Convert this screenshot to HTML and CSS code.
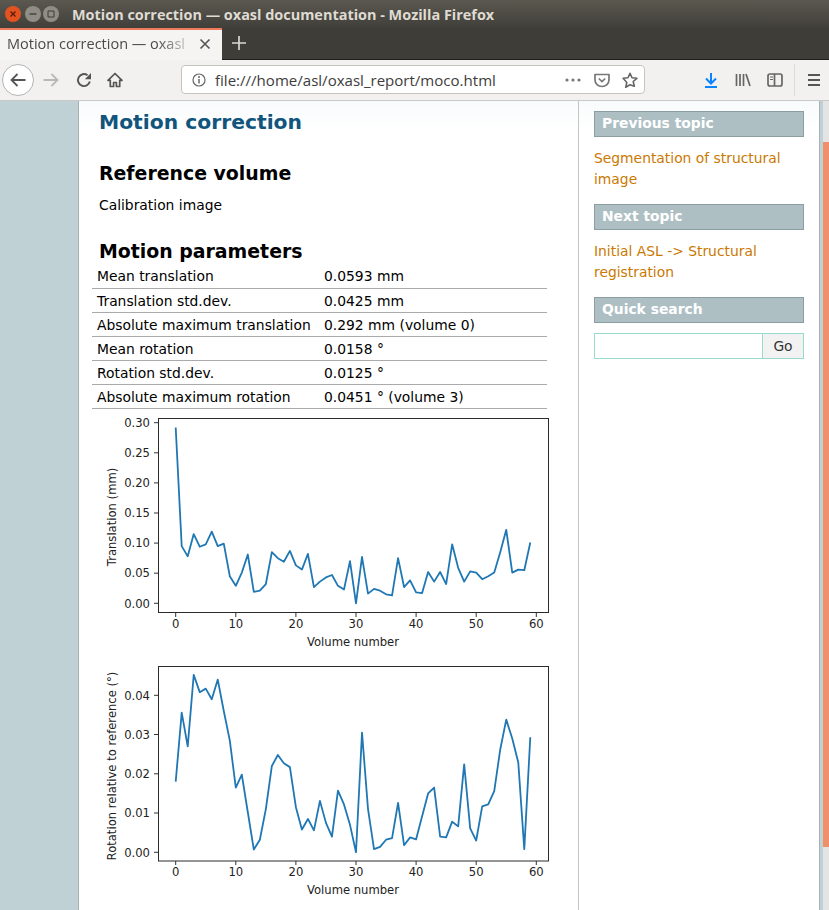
FILE: index.html
```html
<!DOCTYPE html>
<html>
	<head>
		<meta charset="UTF-8">
		<title>Motion correction — oxasl documentation</title>
		<link rel="stylesheet" href="styles.css">
	</head>
	<body>
		<div class="titlebar">
			<span class="winbtn close"><svg width="16" height="16" viewBox="0 0 16 16"><path d="M5.5 5.5l5 5M10.500 5.500l-5 5" stroke="#5a1a08" stroke-width="1.300"/></svg></span>
			<span class="winbtn"><svg width="16" height="16" viewBox="0 0 16 16"><path d="M4.500 8h7" stroke="#3c3b37" stroke-width="1.300"/></svg></span>
			<span class="winbtn"><svg width="16" height="16" viewBox="0 0 16 16"><path d="M5 5h6v6H5z" fill="none" stroke="#3c3b37"/></svg></span>
			<span class="wintitle">Motion correction — oxasl documentation - Mozilla Firefox</span>
		</div>
		<div class="tabbar">
			<div class="tab">
				<span class="tabtext">Motion correction — oxasl</span>
				<svg width="12" height="12" viewBox="0 0 12 12"><path d="M1.500 1.500l9 9M10.500 1.500l-9 9" stroke="#555" stroke-width="1.600"/></svg>
			</div>
			<svg class="newtab" width="14" height="14" viewBox="0 0 14 14"><path d="M7 0v14M0 7h14" stroke="#d8d7d3" stroke-width="1.700"/></svg>
		</div>
		<div class="navbar">
			<span class="backbtn"><svg width="16" height="16" viewBox="0 0 16 16"><path d="M15.500 8H1.500M7.500 2L1.500 8l6 6" fill="none" stroke="#555" stroke-width="1.800"/></svg></span>
			<svg class="ic fwd" width="16" height="16" viewBox="0 0 16 16"><path d="M.5 8h14M8.500 2l6 6-6 6" fill="none" stroke="#b9b8b6" stroke-width="1.800"/></svg>
			<svg class="ic reload" width="16" height="16" viewBox="0 0 16 16"><path d="M13.800 9.500A6 6 0 1 1 11.500 3.200" fill="none" stroke="#555" stroke-width="1.900"/><path d="M15 1v6.200H8.800z" fill="#555"/></svg>
			<svg class="ic home" width="16" height="16" viewBox="0 0 16 16"><path d="M8 1.500L1 8.300h2.300v6.200h3.300v-4h2.800v4h3.300V8.300H15z" fill="none" stroke="#555" stroke-width="1.700" stroke-linejoin="round"/></svg>
			<div class="urlbar">
				<svg width="14" height="14" viewBox="0 0 14 14"><circle cx="7" cy="7" r="6" fill="none" stroke="#666" stroke-width="1.200"/><path d="M7 6v4.500" stroke="#666" stroke-width="1.500"/><circle cx="7" cy="3.900" r="1" fill="#666"/></svg>
				<span class="urltext">file:///home/asl/oxasl_report/moco.html</span>
				<svg class="dots" width="16" height="4" viewBox="0 0 16 4"><circle cx="2" cy="2" r="1.600" fill="#777"/><circle cx="8" cy="2" r="1.600" fill="#777"/><circle cx="14" cy="2" r="1.600" fill="#777"/></svg>
				<svg class="pocket" width="16" height="16" viewBox="0 0 16 16"><path d="M1 2.500h14v5.500a7 6.500 0 0 1-14 0z" fill="none" stroke="#777" stroke-width="1.700" stroke-linejoin="round"/><path d="M4.800 6.500L8 9.500l3.200-3" fill="none" stroke="#777" stroke-width="1.700"/></svg>
				<svg class="star" width="16" height="16" viewBox="0 0 16 16"><path d="M8 1.300l2 4.500 4.900.5-3.700 3.200 1.100 4.800L8 12.800l-4.300 2.500 1.100-4.800L1.100 6.300 6 5.800z" fill="none" stroke="#666" stroke-width="1.600" stroke-linejoin="round"/></svg>
			</div>
			<svg class="ic download" width="16" height="16" viewBox="0 0 16 16"><path d="M8 1v10M3 6.500L8 11.500l5-5" fill="none" stroke="#0a84ff" stroke-width="2"/><path d="M2 15h12" stroke="#0a84ff" stroke-width="2"/></svg>
			<svg class="ic library" width="16" height="16" viewBox="0 0 16 16"><path d="M1.500 2v12M5 2v12M8.500 2v12M11 2l4 12" fill="none" stroke="#666" stroke-width="1.700"/></svg>
			<svg class="ic sidebtn" width="16" height="16" viewBox="0 0 16 16"><rect x="1" y="2" width="14" height="12" rx="2" fill="none" stroke="#666" stroke-width="1.700"/><path d="M7.500 2v12" stroke="#666" stroke-width="1.700"/><path d="M3 5h3M3 7.500h3" stroke="#666"/></svg>
			<span class="navsep"></span>
			<svg class="ic menu" width="16" height="16" viewBox="0 0 16 16"><path d="M2 3h12M2 8h12M2 13h12" stroke="#555" stroke-width="2"/></svg>
		</div>
		<div class="viewport">
			<div class="document">
				<h1>Motion correction</h1>
				<h2>Reference volume</h2>
				<p>Calibration image</p>
				<h2 class="params">Motion parameters</h2>
				<table>
					<tr><td class="name">Mean translation</td><td>0.0593 mm</td></tr>
					<tr><td class="name">Translation std.dev.</td><td>0.0425 mm</td></tr>
					<tr><td class="name">Absolute maximum translation</td><td>0.292 mm (volume 0)</td></tr>
					<tr><td class="name">Mean rotation</td><td>0.0158 °</td></tr>
					<tr><td class="name">Rotation std.dev.</td><td>0.0125 °</td></tr>
					<tr><td class="name">Absolute maximum rotation</td><td>0.0451 ° (volume 3)</td></tr>
				</table>
				<svg class="plot" width="470" height="240" viewBox="92 413 470 240">
					<rect x="158.500" y="418.500" width="390" height="194" class="frame"/>
					<path class="tick" d="M175.700 613v4M235.800 613v4M295.900 613v4M356 613v4M416.100 613v4M476.200 613v4M536.300 613v4M158 603.300h-4M158 573.200h-4M158 543.100h-4M158 513h-4M158 482.900h-4M158 452.800h-4M158 422.700h-4"/>
					<g class="xnum">
						<text x="175.700" y="628">0</text><text x="235.800" y="628">10</text><text x="295.900" y="628">20</text><text x="356" y="628">30</text><text x="416.100" y="628">40</text><text x="476.200" y="628">50</text><text x="536.300" y="628">60</text>
					</g>
					<g class="ynum">
						<text x="150" y="607.500">0.00</text><text x="150" y="577.400">0.05</text><text x="150" y="547.300">0.10</text><text x="150" y="517.200">0.15</text><text x="150" y="487.100">0.20</text><text x="150" y="457">0.25</text><text x="150" y="426.900">0.30</text>
					</g>
					<text class="xlabel" x="353" y="646">Volume number</text>
					<text class="ylabel" transform="translate(116 517) rotate(-90)">Translation (mm)</text>
					<polyline class="series" transform="translate(175.700 603.300) scale(6.010 -602)" points="0,.292 1,.095 2,.078 3,.115 4,.094 5,.098 6,.119 7,.095 8,.099 9,.045 10,.029 11,.051 12,.081 13,.019 14,.021 15,.032 16,.085 17,.075 18,.069 19,.087 20,.063 21,.056 22,.082 23,.027 24,.036 25,.043 26,.047 27,.029 28,.023 29,.070 30,0 31,.077 32,.016 33,.024 34,.021 35,.015 36,.013 37,.075 38,.027 39,.038 40,.018 41,.017 42,.052 43,.036 44,.052 45,.032 46,.098 47,.059 48,.036 49,.053 50,.051 51,.040 52,.045 53,.051 54,.085 55,.122 56,.051 57,.056 58,.055 59,.101"/>
				</svg>
				<svg class="plot" width="470" height="245" viewBox="92 660 470 245">
					<rect x="158.500" y="666.500" width="390" height="194.500" class="frame"/>
					<path class="tick" d="M175.700 861v4M235.800 861v4M295.900 861v4M356 861v4M416.100 861v4M476.200 861v4M536.300 861v4M158 852.300h-4M158 813h-4M158 773.800h-4M158 734.500h-4M158 695.300h-4"/>
					<g class="xnum">
						<text x="175.700" y="876">0</text><text x="235.800" y="876">10</text><text x="295.900" y="876">20</text><text x="356" y="876">30</text><text x="416.100" y="876">40</text><text x="476.200" y="876">50</text><text x="536.300" y="876">60</text>
					</g>
					<g class="ynum">
						<text x="150" y="856.500">0.00</text><text x="150" y="817.200">0.01</text><text x="150" y="778">0.02</text><text x="150" y="738.700">0.03</text><text x="150" y="699.500">0.04</text>
					</g>
					<text class="xlabel" x="353" y="894">Volume number</text>
					<text class="ylabel" transform="translate(116 766) rotate(-90)">Rotation relative to reference (°)</text>
					<polyline class="series" transform="translate(175.700 852.300) scale(6.010 -3925)" points="0,.018 1,.0356 2,.027 3,.0452 4,.0408 5,.0417 6,.039 7,.044 8,.036 9,.0285 10,.0165 11,.0198 12,.0102 13,.0007 14,.0032 15,.011 16,.022 17,.0248 18,.0227 19,.0217 20,.0115 21,.0058 22,.0085 23,.0056 24,.0131 25,.0075 26,.004 27,.0157 28,.0122 29,.0070 30,0 31,.0305 32,.011 33,.0008 34,.0014 35,.0032 36,.0036 37,.0126 38,.0018 39,.0038 40,.0033 41,.0092 42,.015 43,.0165 44,.004 45,.0038 46,.0078 47,.0066 48,.0224 49,.0061 50,.003 51,.0117 52,.0122 53,.0156 54,.0262 55,.0338 56,.029 57,.0229 58,.0008 59,.0293"/>
				</svg>
			</div>
			<div class="sidebar">
				<h3>Previous topic</h3>
				<p><a href="#">Segmentation of structural image</a></p>
				<h3>Next topic</h3>
				<p><a href="#">Initial ASL -&gt; Structural registration</a></p>
				<h3>Quick search</h3>
				<form class="search">
					<input type="text">
					<button type="button">Go</button>
				</form>
			</div>
			<div class="scrollbar"><div class="thumb"></div></div>
		</div>
	</body>
</html>
```

FILE: styles.css
```css
html, body{
	margin: 0;
	padding: 0;
	height: 910px;
	overflow: hidden;
}
body{
	font-family: "Open Sans", "Noto Sans", sans-serif;
	background: #bfd1d4;
}
.titlebar{
	height: 28px;
	display: flex;
	align-items: center;
	padding-left: 5px;
	box-sizing: border-box;
	background: linear-gradient(#5b584f, #403f3a);
}
.winbtn{
	width: 16px;
	height: 16px;
	border-radius: 50%;
	background: #8f8d86;
	margin-right: 2px;
	display: block;
}
.winbtn svg{
	display: block;
}
.winbtn.close{
	background: #e2531f;
	margin-right: 4px;
}
.wintitle{
	margin-left: 11px;
	color: #dfdbd2;
	font-size: 14.450px;
	font-weight: 700;
	white-space: nowrap;
}
.tabbar{
	height: 32px;
	box-sizing: border-box;
	display: flex;
	align-items: center;
	background: #3e3d38;
	border-bottom: 1px solid #1e1e1c;
}
.tab{
	width: 222px;
	height: 32px;
	box-sizing: border-box;
	align-self: flex-start;
	display: flex;
	align-items: center;
	padding: 0 11px 2px 7px;
	background: #f5f4f3;
	border-top: 2px solid #ee7b59;
}
.tabtext{
	width: 192px;
	white-space: nowrap;
	font-size: 14.500px;
	color: #4a4a48;
	margin-bottom: 2px;
	-webkit-mask-image: linear-gradient(to right, #000 150px, transparent 190px);
	mask-image: linear-gradient(to right, #000 150px, transparent 190px);
}
.newtab{
	margin: 0 0 2px 10px;
}
.navbar{
	height: 41px;
	box-sizing: border-box;
	display: flex;
	align-items: center;
	padding: 0 0 1px 2px;
	background: #f2f1f0;
	border-bottom: 1px solid #c9c9c9;
}
.backbtn{
	width: 32px;
	height: 32px;
	box-sizing: border-box;
	border-radius: 50%;
	background: #fff;
	border: 1px solid #b4b4b4;
	display: flex;
	align-items: center;
	justify-content: center;
}
.ic{
	flex: none;
}
.fwd{
	margin-left: 9px;
}
.reload{
	margin-left: 17px;
}
.home{
	margin-left: 15px;
}
.urlbar{
	width: 464px;
	height: 29px;
	box-sizing: border-box;
	margin-left: 58px;
	padding: 0 6px 0 10px;
	display: flex;
	align-items: center;
	background: #fff;
	border: 1px solid #c6c4c1;
	border-radius: 4px;
}
.urltext{
	margin-left: 9px;
	font-size: 15.050px;
	color: #3d3d3b;
	white-space: nowrap;
}
.dots{
	margin-left: auto;
}
.pocket{
	margin-left: 13px;
}
.star{
	margin-left: 12px;
}
.download{
	margin-left: 58px;
}
.library{
	margin-left: 16px;
}
.sidebtn{
	margin-left: 16px;
}
.navsep{
	width: 1px;
	height: 32px;
	margin-left: 11px;
	background: #dcdbd9;
}
.menu{
	margin-left: 11px;
}
.viewport{
	height: 810px;
	display: flex;
	overflow: hidden;
	font-family: "DejaVu Sans", sans-serif;
	font-size: 13.860px;
	color: #000;
}
.document{
	width: 501px;
	margin-left: 78px;
	flex: none;
	box-sizing: border-box;
	padding: 0 0 0 13px;
	background: linear-gradient(#f8fbfc, #fff 30px);
	border-left: 1px solid #a9b1b3;
	border-right: 1px solid #c4c4c4;
}
h1{
	margin: 6px 0 0 7px;
	font-size: 20.300px;
	line-height: 30px;
	color: #11557c;
}
h2{
	margin: 23px 0 0 7px;
	font-size: 18.900px;
	line-height: 26px;
}
.document p{
	margin: 8px 0 0 7px;
	line-height: 22px;
}
h2.params{
	margin-top: 22px;
}
table{
	border-collapse: collapse;
	width: 455px;
	margin-top: 0;
}
td{
	height: 24px;
	padding: 1px 5px 0;
	box-sizing: border-box;
	border-bottom: 1px solid #aaa;
	white-space: nowrap;
}
td.name{
	width: 227px;
}
.plot{
	display: block;
}
.plot:first-of-type{
	margin-top: 4px;
}
.plot + .plot{
	margin-top: 7px;
}
.frame{
	fill: #fff;
	stroke: #2b2b2b;
}
.tick{
	stroke: #333;
	fill: none;
}
.plot text{
	font-family: "DejaVu Sans", sans-serif;
	font-size: 11.600px;
	fill: #222;
}
.xnum text, .xlabel, .ylabel{
	text-anchor: middle;
}
.ynum text{
	text-anchor: end;
}
.series{
	fill: none;
	stroke: #1f77b4;
	stroke-width: 1.800px;
	stroke-linejoin: round;
	vector-effect: non-scaling-stroke;
}
.sidebar{
	width: 241px;
	flex: none;
	box-sizing: border-box;
	padding: 10px 15px 0 15px;
	background: linear-gradient(#f8fbfc, #fff 30px);
	border-right: 1px solid #a9b1b3;
}
h3{
	margin: 0;
	height: 26px;
	box-sizing: border-box;
	padding-left: 7px;
	border: 1px solid #8a9ea3;
	background: #aebfc4;
	color: #fff;
	font-size: 13.860px;
	line-height: 23px;
}
.sidebar p{
	margin: 11px 0 14px;
	line-height: 21px;
}
a{
	color: #ca7900;
	text-decoration: none;
}
.search{
	display: flex;
	margin-top: 10px;
	height: 26px;
}
.search input{
	width: 168px;
	box-sizing: border-box;
	margin: 0;
	padding: 0;
	border: 1px solid #98dbcc;
	border-right: 0;
	background: #fff;
}
.search button{
	width: 42px;
	margin: 0;
	padding: 0;
	box-sizing: border-box;
	border: 1px solid #98dbcc;
	background: #f2f2f2;
	color: #333;
	font-family: "DejaVu Sans", sans-serif;
	font-size: 13.860px;
}
.scrollbar{
	flex: 1;
	margin-left: 3px;
	background: #e4e4e4;
}
.thumb{
	height: 705px;
	margin-top: 41px;
	background: #f0906a;
}
```
